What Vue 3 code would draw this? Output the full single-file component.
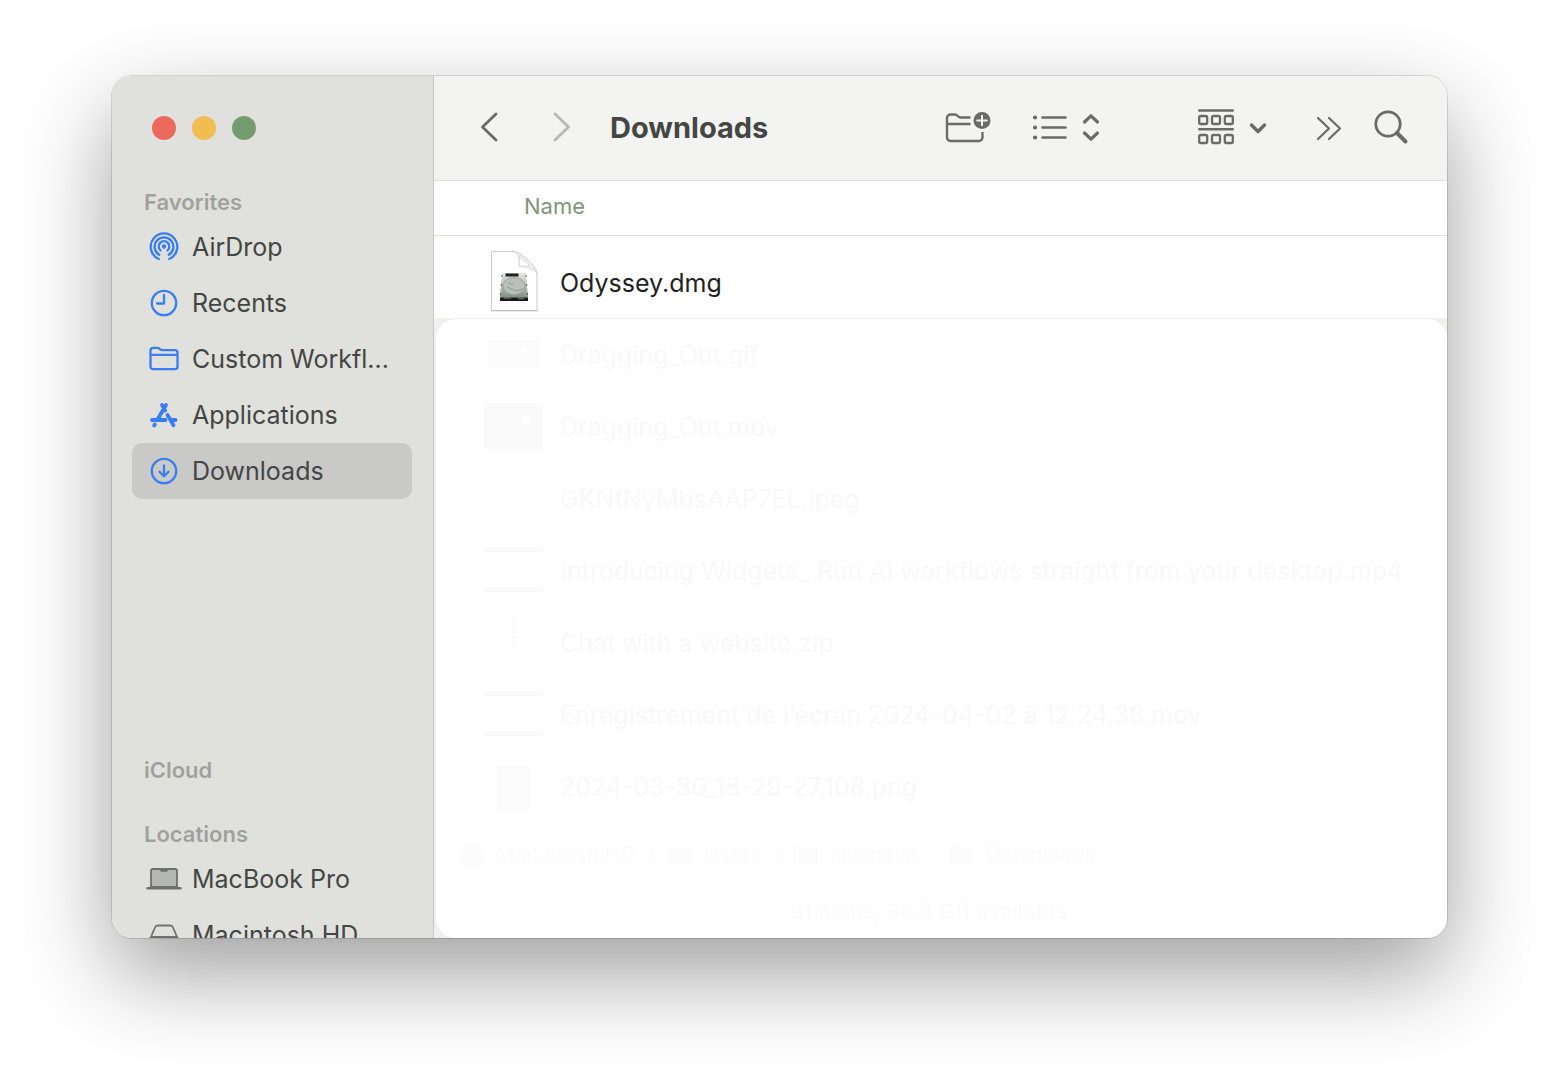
<template>
  <div class="desktop">
    <div class="window">
      <aside class="sidebar">
        <div class="lights">
          <button class="light close" aria-label="Close"></button>
          <button class="light minimize" aria-label="Minimize"></button>
          <button class="light zoom" aria-label="Zoom"></button>
        </div>
        <nav v-for="section in sections" :key="section.title" class="section" :class="section.key">
          <h2 class="section-title">{{ section.title }}</h2>
          <a
            v-for="item in section.items"
            :key="item.label"
            href="#"
            class="place"
            :class="{ active: item.label === current }"
            @click.prevent="current = item.label"
          >
            <svg class="place-icon" :class="{ device: section.key === 'locations' }" viewBox="0 0 36 36">
              <g v-if="item.icon === 'airdrop'">
                <circle cx="18" cy="17.500" r="2.200" fill="currentColor" stroke="none" />
                <path d="M14.500 21.500a5.300 5.300 0 1 1 7 0" />
                <path d="M13.200 25.800a9.400 9.400 0 1 1 9.600 0" />
                <path d="M12.800 30a13.300 13.300 0 1 1 10.400 0" />
              </g>
              <g v-else-if="item.icon === 'clock'">
                <circle cx="18" cy="18" r="12.2" />
                <path d="M18 10v8.500h-7" />
              </g>
              <g v-else-if="item.icon === 'folder'">
                <path d="M4.500 25.500V9.500a2.600 2.600 0 0 1 2.600-2.600h4.600c1.600 0 2.200 2.200 4 2.200h13.200a2.600 2.600 0 0 1 2.600 2.600v13.800a2.600 2.600 0 0 1-2.600 2.600H7.100a2.600 2.600 0 0 1-2.600-2.600zM4.500 13.800h27" />
              </g>
              <g v-else-if="item.icon === 'apps'" stroke-width="3.800">
                <path d="M16 8l3.200 5.500M21.500 18l6 10.300M20 8l-8.300 14.300M6 23h13.500M25.500 23h4M8.800 27.400l-.6 1" />
              </g>
              <g v-else-if="item.icon === 'download'">
                <circle cx="18" cy="18" r="12.2" />
                <path d="M18 12.500v10.500M13.500 18.800l4.500 4.500 4.500-4.500" />
              </g>
              <g v-else-if="item.icon === 'laptop'">
                <path d="M5 26V9.500a1.500 1.500 0 0 1 1.500-1.500h23a1.500 1.500 0 0 1 1.500 1.500V26z" fill="#b5b7b5" stroke-width="1.800" />
                <path d="M15.500 9.500h5" stroke-width="2.400" />
                <path d="M1.500 27.200h33" stroke-width="2.400" />
              </g>
              <g v-else stroke-width="1.800">
                <path d="M5 20l4-9.500a3 3 0 0 1 2.800-2h12.400a3 3 0 0 1 2.800 2L31 20M6 20h24a2 2 0 0 1 2 2v6H4v-6a2 2 0 0 1 2-2z" />
              </g>
            </svg>
            <span class="place-label">{{ item.label }}</span>
          </a>
        </nav>
      </aside>

      <main class="main">
        <header class="toolbar">
          <button class="tool back" aria-label="Back">
            <svg width="20" height="32" viewBox="0 0 20 32"><path d="M17 3L3.500 16 17 29" /></svg>
          </button>
          <button class="tool forward" aria-label="Forward">
            <svg width="20" height="32" viewBox="0 0 20 32"><path d="M3 3l13.500 13L3 29" /></svg>
          </button>
          <h1 class="title">Downloads</h1>
          <button class="tool new-folder" aria-label="New folder">
            <svg width="46" height="36" viewBox="0 0 46 36">
              <path d="M25.500 8.500H15.500c-2.500 0-3-3-5.500-3H5.500A3.500 3.500 0 0 0 2 9v19.500A3.500 3.500 0 0 0 5.500 32H34a3.500 3.500 0 0 0 3.500-3.500V23M2 15h23.500" stroke-width="2.400" stroke-linecap="butt" />
              <circle cx="37" cy="11.500" r="8.500" fill="currentColor" stroke="none" />
              <path d="M37 6.700v9.600M32.200 11.500h9.600" stroke="#f3f3f1" stroke-width="2" />
            </svg>
          </button>
          <button class="tool view" aria-label="View as list">
            <svg width="36" height="36" viewBox="0 0 36 36">
              <path d="M10.500 8.500h23M10.500 18.500h23M10.500 28.500h23" stroke-width="2.600" />
              <path d="M3 8.500h.1M3 18.500h.1M3 28.500h.1" stroke-width="4.200" />
            </svg>
            <svg width="18" height="36" viewBox="0 0 18 36"><path d="M2.500 13L9 6.800l6.500 6.200M2.500 24L9 30.200l6.500-6.200" stroke-width="3.200" /></svg>
          </button>
          <button class="tool group" aria-label="Group items">
            <svg width="36" height="36" viewBox="0 0 36 36">
              <path d="M1.200 1.500h33.600M1.200 20.300h33.600" stroke-width="2.400" />
              <g stroke-width="2.300">
                <rect v-for="n in 6" :key="n" :x="1.200 + ((n - 1) % 3) * 12.800" :y="n > 3 ? 26 : 7" width="8" height="8" rx="1.600" />
              </g>
            </svg>
            <svg width="18" height="36" viewBox="0 0 18 36"><path d="M2.500 16L9 22.500l6.500-6.500" stroke-width="3.400" /></svg>
          </button>
          <button class="tool more" aria-label="More">
            <svg width="26" height="28" viewBox="0 0 26 28"><path d="M2 5l11 10.500L2 26M13 5l11 10.500L13 26" stroke-width="2.200" /></svg>
          </button>
          <button class="tool search" aria-label="Search">
            <svg width="36" height="36" viewBox="0 0 36 36"><circle cx="15" cy="15" r="12.200" stroke-width="2.800" /><path d="M24 24l8.500 8.500" stroke-width="4" /></svg>
          </button>
        </header>

        <div class="content">
          <table class="files">
            <thead>
              <tr><th scope="col">Name</th></tr>
            </thead>
            <tbody>
              <tr v-for="file in files" :key="file.name">
                <td>
                  <div class="file">
                    <svg class="thumb" viewBox="0 0 60 72">
                      <g v-if="file.thumb === 'dmg'">
                        <defs>
                          <linearGradient id="disk" x1="0" y1="0" x2="0" y2="1">
                            <stop offset="0" stop-color="#e3e5e3" />
                            <stop offset=".5" stop-color="#b4b9b4" />
                            <stop offset="1" stop-color="#718271" />
                          </linearGradient>
                          <linearGradient id="curl" x1="0" y1="1" x2="1" y2="0">
                            <stop offset="0" stop-color="#fff" />
                            <stop offset="1" stop-color="#e4e4e2" />
                          </linearGradient>
                        </defs>
                        <path d="M7.500 4.500H30c6 0 23 15 23 22v37H7.500z" fill="#fff" stroke="#c9ccc9" />
                        <path d="M7 63.800h46.500" stroke="#b8bbb8" />
                        <path d="M30 4.500c5 1.500 5.500 8 5 15 8 .500 16 2 18 7 0-7-17-22-23-22z" fill="url(#curl)" stroke="#d5d7d5" />
                        <path d="M35.500 9.500v9.500H46z" fill="#fff" stroke="#dcdedc" />
                        <path d="M18 26h24l2 24.500V54H16v-3.500z" fill="url(#disk)" />
                        <path d="M21.500 28h13" stroke="#202320" stroke-width="3" />
                        <ellipse cx="30" cy="39" rx="11" ry="8.500" fill="#b9bfb9" stroke="#9aa79a" />
                        <path d="M23 40l9 4 7-2M24 36l6 2" fill="none" stroke="#8a9c8a" />
                        <path d="M18 28l-1.500 21M42 28l1.500 21" stroke="#555a55" stroke-dasharray="2 7" />
                        <path d="M16 52.300h28" stroke="#181a18" stroke-width="3.400" />
                        <path d="M20 51h7M34 51.500h6" stroke="#677067" stroke-width="1.500" />
                      </g>
                      <path v-else-if="file.thumb === 'gif'" d="M4 20h52v29H4zM35 27v6h8v-6z" fill="#777" fill-rule="evenodd" />
                      <path v-else-if="file.thumb === 'mov'" d="M0 12h59v46H0zM37 25v8h9v-8z" fill="#666" fill-rule="evenodd" />
                      <g v-else-if="file.thumb === 'wide'">
                        <path d="M0 14.500h59M0 54.500h59" stroke="#666" stroke-width="6" />
                        <path d="M2 22h55M18 28h15M4 36h30M8 44h40" stroke="#ccc" stroke-width="2" stroke-dasharray="2 3" />
                      </g>
                      <path v-else-if="file.thumb === 'zip'" d="M30 8v32" stroke="#888" stroke-width="6" stroke-dasharray="3 2" />
                      <rect v-else-if="file.thumb === 'png'" x="13" y="15" width="33" height="46" fill="#888" />
                    </svg>
                    <span>{{ file.name }}</span>
                  </div>
                </td>
              </tr>
            </tbody>
          </table>
          <div class="pathbar">
            <template v-for="(part, i) in path" :key="part">
              <span v-if="i" class="sep">›</span>
              <svg class="path-icon" width="24" height="24" viewBox="0 0 24 24">
                <path v-if="i" d="M0 2h9l3 2h12v18H0z" />
                <path v-else d="M3 0h18l3 18v6H0v-6z" />
              </svg>
              <span>{{ part }}</span>
            </template>
          </div>
          <footer class="status">91 items, 36.5 GB available</footer>
          <div class="veil"></div>
        </div>
      </main>
    </div>
  </div>
</template>

<script setup>
import { ref } from 'vue'

const current = ref('Downloads')

const sections = [
  {
    key: 'favorites',
    title: 'Favorites',
    items: [
      { label: 'AirDrop', icon: 'airdrop' },
      { label: 'Recents', icon: 'clock' },
      { label: 'Custom Workfl...', icon: 'folder' },
      { label: 'Applications', icon: 'apps' },
      { label: 'Downloads', icon: 'download' }
    ]
  },
  { key: 'icloud', title: 'iCloud', items: [] },
  {
    key: 'locations',
    title: 'Locations',
    items: [
      { label: 'MacBook Pro', icon: 'laptop' },
      { label: 'Macintosh HD', icon: 'drive' }
    ]
  }
]

const files = [
  { name: 'Odyssey.dmg', thumb: 'dmg' },
  { name: 'Dragging_Out.gif', thumb: 'gif' },
  { name: 'Dragging_Out.mov', thumb: 'mov' },
  { name: 'GKNtNyMbsAAP7EL.jpeg', thumb: 'none' },
  { name: 'Introducing Widgets_ Run AI workflows straight from your desktop.mp4', thumb: 'wide' },
  { name: 'Chat with a website.zip', thumb: 'zip' },
  { name: 'Enregistrement de l’écran 2024-04-02 à 12.24.38.mov', thumb: 'wide' },
  { name: '2024-03-30_18-29-27.108.png', thumb: 'png' }
]

const path = ['Macintosh HD', 'Users', 'julienolie', 'Downloads']
</script>

<style>
body {
  margin: 0;
  background: #fff;
}
</style>

<style scoped>
.desktop {
  box-sizing: border-box;
  min-height: 100vh;
  padding: 76px 111px 148px 112px;
  font-family: Inter, "Liberation Sans", sans-serif;
  font-size: 25px;
  color: #444643;
  overflow: hidden;
}

.window {
  display: grid;
  grid-template-columns: 322px minmax(0, 1fr);
  border-radius: 20px;
  overflow: hidden;
  background: #fff;
  box-shadow: 0 0 0 1px rgba(0, 0, 0, 0.12), 0 36px 92px rgba(0, 0, 0, 0.38);
}

/* The sidebar never makes the window taller, its last rows are cut off */
.sidebar {
  contain: size;
  box-sizing: border-box;
  padding: 40px 21px 0 20px;
  overflow: hidden;
  background: #e0e1dc;
  border-right: 1px solid #c6c7c4;
}

.lights {
  display: flex;
  gap: 16px;
  padding-left: 20px;
  margin-bottom: 45px;
}

.light {
  width: 24px;
  height: 24px;
  padding: 0;
  border: 0;
  border-radius: 50%;
}

.close {
  background: #ec695d;
}

.minimize {
  background: #f2bd50;
}

.zoom {
  background: #759c70;
}

.favorites {
  margin-bottom: 254px;
}

.icloud {
  margin-bottom: 30px;
}

.section-title {
  margin: 0;
  padding-left: 12px;
  font-size: 22px;
  line-height: 34px;
  font-weight: 600;
  color: #a0a19e;
}

.place {
  display: flex;
  align-items: center;
  gap: 10px;
  height: 56px;
  padding-left: 14px;
  border-radius: 10px;
  color: inherit;
  text-decoration: none;
}

.place.active {
  background: #c9c9c7;
}

.place-label {
  white-space: nowrap;
}

.place-icon {
  flex: none;
  width: 36px;
  height: 36px;
  color: #387df4;
  fill: none;
  stroke: currentColor;
  stroke-width: 2.3;
  stroke-linecap: round;
  stroke-linejoin: round;
}

.place-icon.device {
  color: #6e706d;
}

.toolbar {
  display: flex;
  align-items: center;
  box-sizing: border-box;
  height: 105px;
  padding: 0 38px 2px 45px;
  background: #f3f3f1;
  border-bottom: 1px solid #dededc;
}

.tool {
  display: flex;
  align-items: center;
  padding: 0;
  border: 0;
  background: none;
  color: #6a6b68;
}

.tool svg {
  fill: none;
  stroke: currentColor;
  stroke-width: 2.8;
  stroke-linecap: round;
  stroke-linejoin: round;
}

.forward {
  margin-left: 53px;
  color: #b7b8b6;
}

.title {
  flex: 1;
  margin: 0 0 0 38px;
  font-size: 29px;
  font-weight: 700;
}

.view {
  gap: 14px;
  margin-left: 41px;
}

.group {
  gap: 15px;
  margin-left: 98px;
}

.more {
  margin-left: 49px;
}

.search {
  margin-left: 31px;
}

.content {
  position: relative;
  background: linear-gradient(#fff 137px, #f0f0ee 137px);
}

.files {
  width: 100%;
  border-collapse: collapse;
}

.files th {
  height: 54px;
  padding: 0 0 4px 90px;
  box-sizing: border-box;
  border-bottom: 1px solid #dededc;
  font-size: 22px;
  font-weight: 400;
  text-align: left;
  color: #7f957b;
}

.files tbody::before {
  content: "";
  display: block;
  height: 11px;
}

.files td {
  padding: 0 0 0 50px;
  color: #222;
}

.file {
  display: flex;
  align-items: center;
  gap: 16px;
  height: 72px;
  white-space: nowrap;
}

.thumb {
  flex: none;
  width: 60px;
  height: 72px;
}

.pathbar {
  display: flex;
  align-items: center;
  gap: 12px;
  height: 58px;
  margin-top: 3px;
  padding-left: 26px;
  font-size: 21px;
  color: #777;
}

.path-icon {
  fill: #999;
}

.status {
  height: 54px;
  line-height: 54px;
  font-size: 22px;
  text-align: center;
  padding-right: 24px;
  color: #666;
}

/* Fades everything below the first file */
.veil {
  position: absolute;
  inset: 138px 0 0 2px;
  border-radius: 20px;
  background: rgba(255, 255, 255, 0.97);
}
</style>
